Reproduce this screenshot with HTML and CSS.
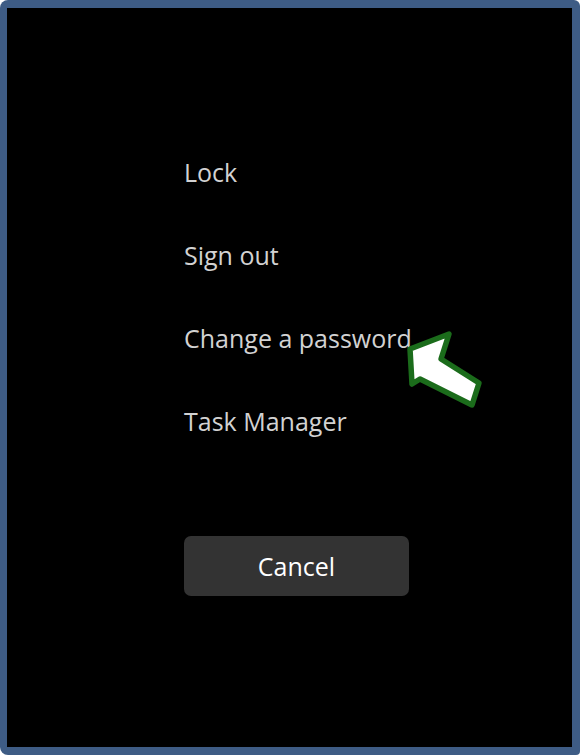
FILE: index.html
```html
<!DOCTYPE html>
<html>
<head>
<meta charset="utf-8">
<link rel="stylesheet" href="styles.css">
</head>
<body>
<div class="frame">
  <div class="screen">
    <ul class="menu">
      <li class="item">Lock</li>
      <li class="item">Sign out</li>
      <li class="item item-target">Change a password
        <svg class="pointer" width="90" height="90" viewBox="0 0 90 90" aria-hidden="true">
          <polygon points="6,20 45,5 37,30 75,54 68,76 16,50 8,55" fill="#ffffff" stroke="#1b6c1b" stroke-width="5.5" stroke-linejoin="round"/>
        </svg>
      </li>
      <li class="item">Task Manager</li>
    </ul>
    <button class="cancel">Cancel</button>
  </div>
</div>
</body>
</html>
```
FILE: styles.css
```css
* { box-sizing: border-box; }
html, body { margin: 0; padding: 0; background: #ffffff; }
.frame {
  width: 580px;
  height: 755px;
  background: #3e5c85;
  border-radius: 8px 6px 4px 8px;
  padding: 8px 8px 8px 7px;
}
.screen {
  width: 100%;
  height: 100%;
  background: #000000;
  padding: 123px 0 0 177px;
  font-family: "Open Sans", "Noto Sans", sans-serif;
}
.menu {
  list-style: none;
  margin: 0;
  padding: 0;
}
.item {
  height: 83px;
  line-height: 83px;
  font-size: 25px;
  color: #d2d2d2;
  white-space: nowrap;
}
.item-target { position: relative; }
.pointer {
  position: absolute;
  left: 220px;
  top: 32px;
}
.cancel {
  display: block;
  margin-top: 73px;
  width: 225px;
  height: 60px;
  margin-left: 0;
  border: none;
  border-radius: 7px;
  background: #333333;
  color: #ffffff;
  font-family: "Open Sans", "Noto Sans", sans-serif;
  font-size: 25px;
  padding: 0;
}
```
